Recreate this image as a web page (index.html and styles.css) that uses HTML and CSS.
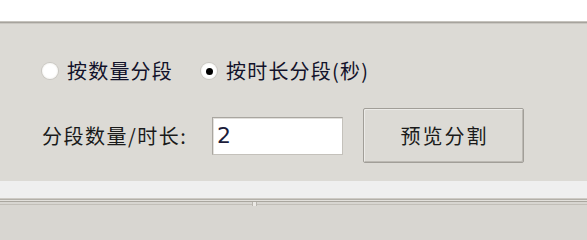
FILE: index.html
```html
<!DOCTYPE html>
<html lang="zh-CN">
<head>
<meta charset="utf-8">
<title>分段设置</title>
<link rel="stylesheet" href="styles.css">
</head>
<body>
<div class="top"></div>
<div class="top-line"></div>
<div class="panel">
  <div class="row radios">
    <label class="radio">
      <span class="dot"></span>
      <span class="text">按数量分段</span>
    </label>
    <label class="radio checked">
      <span class="dot"></span>
      <span class="text">按时长分段(秒)</span>
    </label>
  </div>
  <div class="row form">
    <span class="label">分段数量/时长:</span>
    <div class="input">2</div>
    <div class="button">预览分割</div>
  </div>
</div>
<div class="band"></div>
<div class="bottom">
  <div class="notch"></div>
</div>
<div class="below"></div>
</body>
</html>
```

FILE: styles.css
```css
html, body {
  margin: 0;
  padding: 0;
  background: #d8d6d1;
  font-family: "Noto Sans CJK SC", "Noto Sans", sans-serif;
  color: #1e1e1e;
}

.top {
  height: 21px;
  background: #ffffff;
}

.top-line {
  height: 3px;
  background: linear-gradient(#c6c3bd 0, #c6c3bd 1px, #a6a39d 1px, #a6a39d 2px, #c9c6c0 2px);
}

.panel {
  background: #dcdad5;
  height: 157px;
  box-sizing: border-box;
  padding: 32px 0 0 42px;
  display: flex;
  flex-direction: column;
  gap: 22px;
}

.row {
  display: flex;
  align-items: center;
}

.radios {
  height: 30px;
  gap: 28px;
}

.radio {
  display: flex;
  align-items: center;
  gap: 9px;
}

.dot {
  width: 16px;
  height: 16px;
  border-radius: 50%;
  background: radial-gradient(circle at 50% 50%, #ffffff 0, #ffffff 55%, #f2f1ee 75%, #d8d6d1 100%);
  box-shadow: 0 0 0 1px #c9c7c2;
  display: flex;
  align-items: center;
  justify-content: center;
}

.checked .dot::after {
  content: "";
  width: 7px;
  height: 7px;
  border-radius: 50%;
  background: #000000;
}

.text {
  font-size: 20px;
  letter-spacing: 1.2px;
  line-height: 30px;
  color: #12122a;
}

.form {
  height: 55px;
}

.label {
  font-size: 20px;
  letter-spacing: 1.5px;
  line-height: 30px;
  width: 170px;
  color: #1a1a1a;
}

.input {
  width: 131px;
  height: 38px;
  box-sizing: border-box;
  background: #ffffff;
  border: 1px solid #a9a6a0;
  border-right-color: #c4c1bb;
  border-bottom-color: #c4c1bb;
  box-shadow: inset 1px 1px 0 #e2e0dc;
  padding-left: 4px;
  font-family: "DejaVu Sans", sans-serif;
  font-size: 22px;
  line-height: 36px;
  color: #1c1c3a;
}

.button {
  margin-left: 20px;
  width: 161px;
  height: 55px;
  box-sizing: border-box;
  border: 1px solid #a19e98;
  border-radius: 2px;
  box-shadow: inset 1px 1px 0 #ecebe8, inset -1px -1px 0 #bcb9b3;
  background: #dcdad5;
  display: flex;
  align-items: center;
  justify-content: center;
  font-size: 20px;
  letter-spacing: 2px;
  padding-left: 2px;
  color: #1a1a1a;
}

.band {
  height: 17px;
  background: #efefef;
}

.bottom {
  height: 8px;
  background: linear-gradient(#cdcac4 0, #cdcac4 1px, #b3b0a9 1px, #b3b0a9 2px, #e2e0db 2px, #e2e0db 3px, #aaa79f 3px, #aaa79f 4px, #d8d6d1 4px, #d8d6d1 6px, #c2bfb8 6px, #c2bfb8 7px, #d8d6d1 7px);
  display: flex;
  align-items: flex-end;
}

.notch {
  margin-left: 252px;
  width: 5px;
  height: 4px;
  background: #ebe9e5;
  border-left: 1px solid #b8b5ae;
  border-right: 1px solid #b8b5ae;
  box-sizing: border-box;
}

.below {
  height: 40px;
  background: #d8d6d1;
}
```
